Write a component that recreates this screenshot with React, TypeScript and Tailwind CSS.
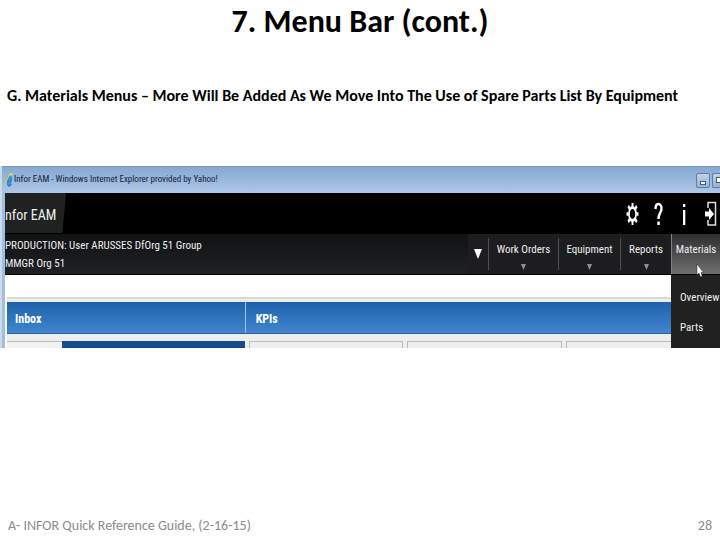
import { useState } from 'react';

type MenuItem = { label: string; width: string };

const menuItems: MenuItem[] = [
  { label: 'Work Orders', width: 'w-[70px]' },
  { label: 'Equipment', width: 'w-[62px]' },
  { label: 'Reports', width: 'w-[51px]' },
];

function BrowserIcon() {
  return (
    <svg viewBox="0 0 16 16" preserveAspectRatio="none" className="h-4 w-2 shrink-0" aria-hidden="true">
      <path d="M13 9H4.500c.2 5 5 5 8 2.500" fill="none" stroke="#2f8ad0" strokeWidth="3.500" />
      <path d="M4 9C4 3.500 12.500 3 12.800 9" fill="none" stroke="#2f8ad0" strokeWidth="3.500" />
      <path d="M2 14C-1 10 10-1 15 3" fill="none" stroke="#e3d35a" strokeWidth="2" />
    </svg>
  );
}

function GearIcon() {
  return (
    <svg viewBox="0 0 24 24" preserveAspectRatio="none" className="h-6 w-[13px]" aria-hidden="true">
      <circle cx="12" cy="12" r="6.500" fill="none" stroke="#fff" strokeWidth="3" />
      <path
        d="M12 1v4M12 19v4M1 12h4M19 12h4M4 4l3 3M17 17l3 3M20 4l-3 3M7 17l-3 3"
        stroke="#fff"
        strokeWidth="3.500"
      />
    </svg>
  );
}

function HelpIcon() {
  return (
    <svg viewBox="0 0 9 24" className="h-6 w-[9px]" aria-hidden="true">
      <path d="M1.500 7C1.500 .5 7.500 .5 7.500 6.500C7.500 11 4.500 11 4.500 17" fill="none" stroke="#fff" strokeWidth="2.400" />
      <path d="M3.300 19.500h2.500v3.500H3.300z" fill="#fff" />
    </svg>
  );
}

function InfoIcon() {
  return (
    <svg viewBox="0 0 4 24" className="h-6 w-1" aria-hidden="true">
      <path d="M1 2h2.300v3H1zM1 8h2.300v15H1z" fill="#fff" />
    </svg>
  );
}

function LogoutIcon() {
  return (
    <svg viewBox="0 0 12 26" className="h-[26px] w-3" aria-hidden="true">
      <path d="M3 7V1.500h7.500v22.500H3v-5" fill="none" stroke="#ddd" strokeWidth="1.500" />
      <path d="M0 10.500h4V7l5 6-5 6v-3.500H0z" fill="#fff" />
    </svg>
  );
}

function Caret({ className }: { className: string }) {
  return (
    <svg viewBox="0 0 10 10" preserveAspectRatio="none" className={className} aria-hidden="true">
      <path d="M0 0h10L5 10z" fill="currentColor" />
    </svg>
  );
}

function Pointer() {
  return (
    <svg viewBox="0 0 8 15" className="absolute top-[29px] left-[25px] z-20 h-[15px] w-2" aria-hidden="true">
      <path d="M1 1v11l2-2 1.500 4L6.200 13 5 9.500h2.500z" fill="#fff" stroke="#222" strokeWidth=".5" />
    </svg>
  );
}

function TitleBar() {
  return (
    <div className="flex h-[27px] items-center justify-between border-t border-[#7d93a8] bg-linear-to-b from-[#86a8d0] to-[#adc8e8] pl-[3px]">
      <div className="flex items-center gap-px text-[9px] text-[#14213a]">
        <BrowserIcon />
        <span>Infor EAM - Windows Internet Explorer provided by Yahoo!</span>
      </div>
      <div className="flex gap-0.5 overflow-hidden">
        <button aria-label="Minimize" className="flex h-[15px] w-3.5 items-end justify-center rounded-xs border border-[#5f7d9f] bg-linear-to-b from-[#bfd3ea] to-[#94b3d6] pb-0.5">
          <span className="h-1 w-1.5 border border-[#465a73] bg-white" />
        </button>
        <button aria-label="Restore" className="flex h-[15px] w-2 items-center justify-end rounded-l-xs border border-r-0 border-[#5f7d9f] bg-linear-to-b from-[#bfd3ea] to-[#94b3d6]">
          <span className="h-1.5 w-1 border border-r-0 border-[#465a73] bg-white" />
        </button>
      </div>
    </div>
  );
}

function AppHeader() {
  return (
    <div className="flex h-[41px] items-start justify-between bg-black">
      <div className="h-10 w-[61px] bg-[#202121] pt-1.5 text-[14px] leading-8 whitespace-nowrap text-[#eee] [clip-path:polygon(0_0,100%_0,94%_100%,0_100%)]">
        nfor EAM
      </div>
      <div className="flex h-full items-center gap-[15px] pr-[3px]">
        <button aria-label="Settings"><GearIcon /></button>
        <button aria-label="Help"><HelpIcon /></button>
        <button aria-label="Information" className="px-1"><InfoIcon /></button>
        <button aria-label="Log out"><LogoutIcon /></button>
      </div>
    </div>
  );
}

function MenuBar() {
  const [open, setOpen] = useState(true);

  return (
    <nav className="flex h-[41px] border-b border-black bg-linear-to-b from-[#111214] to-[#202124] text-[11px] text-[#eee]">
      <div className="flex-1 pt-[3px] leading-[18px] whitespace-nowrap">
        <p>PRODUCTION: User ARUSSES DfOrg 51 Group</p>
        <p>MMGR Org 51</p>
      </div>
      <div className="flex bg-[#1d1d1f]">
        <button aria-label="More menus" className="flex w-5 items-center justify-center text-white">
          <Caret className="h-2.5 w-2" />
        </button>
        {menuItems.map((item) => (
          <button
            key={item.label}
            className={`${item.width} my-1 flex flex-col items-center justify-between border-l border-[#505052] pt-1 whitespace-nowrap`}
          >
            <span>{item.label}</span>
            <Caret className="h-1.5 w-[5px] text-[#909090]" />
          </button>
        ))}
        <div className="relative w-[49px]">
          <button
            onClick={() => setOpen(!open)}
            className="flex h-full w-full items-start justify-center border-l border-[#808080] bg-linear-to-b from-[#303030] to-[#707070] pt-2 whitespace-nowrap"
          >
            Materials
          </button>
          <Pointer />
          {open && (
            <div className="absolute top-[41px] left-0 z-10 flex h-[74px] w-full flex-col gap-2.5 bg-[#212121] pt-[13px] pl-[9px] leading-5">
              <a href="#overview">Overview</a>
              <a href="#parts">Parts</a>
            </div>
          )}
        </div>
      </div>
    </nav>
  );
}

function Dashboard() {
  return (
    <div className="bg-white pt-[22px] pl-0.5">
      <div className="h-[5px] border-t-2 border-[#d9d9d9] bg-[#ececec]" />
      <div className="flex h-8 items-center border-b border-[#285f9f] bg-linear-to-b from-[#1c62ab] to-[#4185cf] text-[12px] font-bold text-white">
        <h2 className="w-1/3 pt-0.5 pl-2">Inbox</h2>
        <h2 className="flex h-full flex-1 items-center border-l border-[#9dc3ea] pt-0.5 pl-2.5">KPIs</h2>
      </div>
      <div className="flex bg-[#eeeeee] pt-[7px]">
        <div className="flex h-[7px] w-1/3">
          <div className="w-[55px] border-t border-[#bbb] bg-[#f2f2f2]" />
          <div className="flex-1 bg-[#164b8c]" />
        </div>
        <div className="flex h-[7px] flex-1 gap-1 pl-1">
          <div className="flex-1 border border-b-0 border-[#bbb]" />
          <div className="flex-1 border border-b-0 border-[#bbb]" />
          <div className="flex-1 border border-b-0 border-[#bbb]" />
        </div>
      </div>
    </div>
  );
}

function App() {
  return (
    <div className="flex min-h-screen flex-col bg-white font-['Carlito','Lato',sans-serif] text-black">
      <h1 className="pt-1 text-center text-[32px] leading-9 font-bold">7. Menu Bar (cont.)</h1>
      <p className="mt-[46px] pl-[7px] text-[16px] leading-5 font-bold whitespace-nowrap">
        G. Materials Menus – More Will Be Added As We Move Into The Use of Spare Parts List By Equipment
      </p>
      <section className="mt-[60px] overflow-hidden font-['Roboto_Condensed','Liberation_Sans',sans-serif]">
        <div className="border-l-2 border-[#c9dcec] bg-[#a3bfdc]">
          <TitleBar />
          <div className="ml-[3px]">
            <AppHeader />
            <MenuBar />
            <Dashboard />
          </div>
        </div>
      </section>
      <footer className="mt-auto flex justify-between px-2 pb-1 text-[14px] leading-5 text-[#8b8b8b]">
        <span>A- INFOR Quick Reference Guide, (2-16-15)</span>
        <span>28</span>
      </footer>
    </div>
  );
}

export default App;
